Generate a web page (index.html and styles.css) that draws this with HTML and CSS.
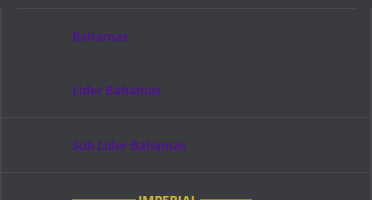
FILE: index.html
```html
<!DOCTYPE html>
<html lang="es">
<head>
<meta charset="UTF-8" />
<title>Rangos</title>
<link rel="stylesheet" href="styles.css">
</head>
<body>
<div class="panel">
  <div class="top-rule"></div>
  <div class="group">
    <div class="rank">Bahamas</div>
    <div class="rank">Lider Bahamas</div>
  </div>
  <div class="group">
    <div class="rank">Sub Lider Bahamas</div>
  </div>
  <div class="faction">
    <span class="line left"></span>
    <span class="faction-name">IMPERIAL</span>
    <span class="line right"></span>
  </div>
</div>
</body>
</html>
```

FILE: styles.css
```css
* {
  box-sizing: border-box;
}
html, body {
  margin: 0;
  height: 100%;
  overflow: hidden;
}
body {
  background: #3a3b3f;
  font-family: "Open Sans", Arial, sans-serif;
}
.panel {
  height: 100%;
  border-left: 2px solid #46474b;
  border-right: 2px solid #46474b;
}
.top-rule {
  height: 1px;
  margin: 8px 15px 0 15px;
  background: #4a4b4f;
}
.group {
  border-bottom: 1px solid #48494d;
}
.rank {
  height: 54px;
  display: flex;
  align-items: center;
  padding-left: 70px;
  color: #4a1784;
  font-weight: 700;
  font-size: 12.5px;
  letter-spacing: -0.3px;
}
.faction {
  display: flex;
  align-items: flex-start;
  margin-top: 19px;
  padding-left: 70px;
}
.faction-name {
  color: #c9b43a;
  font-weight: 700;
  font-size: 13px;
  line-height: 16px;
  letter-spacing: -0.2px;
  padding: 0 2px;
}
.line {
  height: 1px;
  margin-top: 7px;
  background: #8a8352;
}
.line.left {
  width: 64px;
}
.line.right {
  width: 52px;
}
```
